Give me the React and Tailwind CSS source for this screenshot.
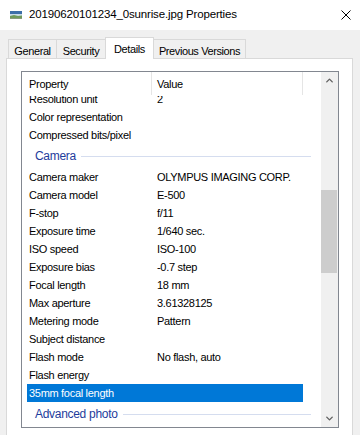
import { ChevronUp, ChevronDown } from 'lucide-react'

const ROWS_TOP = [
  ['Color representation', ''],
  ['Compressed bits/pixel', ''],
]

const CAMERA = [
  ['Camera maker', 'OLYMPUS IMAGING CORP.'],
  ['Camera model', 'E-500'],
  ['F-stop', 'f/11'],
  ['Exposure time', '1/640 sec.'],
  ['ISO speed', 'ISO-100'],
  ['Exposure bias', '-0.7 step'],
  ['Focal length', '18 mm'],
  ['Max aperture', '3.61328125'],
  ['Metering mode', 'Pattern'],
  ['Subject distance', ''],
  ['Flash mode', 'No flash, auto'],
  ['Flash energy', ''],
  ['35mm focal length', '', true],
]

const TABS = [
  { label: 'General', w: 'w-[49px]' },
  { label: 'Security', w: 'w-[50px]' },
  { label: 'Details', w: 'w-[49px]', active: true },
  { label: 'Previous Versions', w: 'w-[93px]' },
]

function Row({ name, value, selected }) {
  return (
    <div
      className={`h-[18px] w-[276px] ml-[5px] pl-[2px] flex items-center shrink-0 ${
        selected ? 'bg-[#0078d7] text-white' : 'text-black'
      }`}
    >
      <span className="w-[128px] shrink-0 whitespace-nowrap">{name}</span>
      <span className="whitespace-nowrap">{value}</span>
    </div>
  )
}

function Group({ label }) {
  return (
    <div className="h-[24px] flex items-center pl-[13px] pr-[10px] shrink-0">
      <span className="text-[#1e3c9c] text-[12px] whitespace-nowrap">{label}</span>
      <div className="flex-1 h-px bg-[#d5ddef] ml-[5px]" />
    </div>
  )
}

export default function App() {
  return (
    <div className="w-[360px] h-[435px] bg-[#f0f0f0] overflow-hidden font-['Liberation_Sans',Arial,sans-serif] text-black">
      {/* title bar */}
      <div className="h-[30px] bg-white flex items-center pl-[10px] pr-[9px]">
        <svg width="12" height="8" viewBox="0 0 12 8" className="shrink-0">
          <rect x="0" y="0" width="12" height="8" fill="#5a7fa6" />
          <rect x="0" y="0" width="12" height="3" fill="#3c6ea8" />
          <rect x="0" y="3" width="12" height="2" fill="#c9dbe8" />
          <path d="M0 5 L4 4 L8 5 L12 4.5 L12 8 L0 8 Z" fill="#6f9a5a" />
          <rect x="0" y="7" width="12" height="1" fill="#8a9a80" />
        </svg>
        <span className="ml-[7px] text-[11.5px] tracking-[-0.15px] whitespace-nowrap">
          20190620101234_0sunrise.jpg Properties
        </span>
        <svg width="10" height="10" viewBox="0 0 10 10" className="ml-auto shrink-0">
          <path d="M0.5 0.5 L9.5 9.5 M9.5 0.5 L0.5 9.5" stroke="#000" strokeWidth="1" />
        </svg>
      </div>

      {/* tabs */}
      <div className="pt-[7px] pl-[8px] h-[28px] flex items-end text-[11px] tracking-[-0.4px]">
        {TABS.map((t, i) => (
          <div
            key={t.label}
            className={`${t.w} ${i > 0 ? '-ml-px' : ''} border border-b-0 border-[#d9d9d9] flex justify-center ${
              t.active
                ? 'h-[22px] bg-white relative z-10 -mb-px pt-[3px]'
                : 'h-[19px] bg-[#f0f0f0] pt-[3px]'
            }`}
          >
            <span className="whitespace-nowrap">{t.label}</span>
          </div>
        ))}
      </div>

      {/* panel */}
      <div className="ml-[6px] w-[347px] h-[400px] bg-white border border-[#d9d9d9] pl-[14px] pt-[12px]">
        <div className="w-[318px] h-[357px] border border-[#828790] flex text-[11px] tracking-[-0.3px]">
          <div className="flex-1 flex flex-col overflow-hidden">
            {/* header */}
            <div className="h-[24px] flex items-stretch shrink-0">
              <div className="w-[129px] pl-[7px] flex items-center">Property</div>
              <div className="w-px mb-px bg-[#e5e5e5]" />
              <div className="w-[150px] pl-[5px] flex items-center">Value</div>
              <div className="w-px mb-px bg-[#e5e5e5]" />
            </div>
            <div className="h-[12px] overflow-hidden shrink-0">
              <div className="-mt-[6px]">
                <Row name="Resolution unit" value="2" />
              </div>
            </div>
            {ROWS_TOP.map(([n, v]) => (
              <Row key={n} name={n} value={v} />
            ))}
            <Group label="Camera" />
            {CAMERA.map(([n, v, s]) => (
              <Row key={n} name={n} value={v} selected={s} />
            ))}
            <Group label="Advanced photo" />
          </div>

          {/* scrollbar */}
          <div className="w-[17px] bg-[#f0f0f0] flex flex-col shrink-0">
            <div className="h-[17px] flex items-center justify-center text-[#606060]">
              <ChevronUp size={11} strokeWidth={3} />
            </div>
            <div className="flex-1">
              <div className="mt-[101px] h-[83px] w-[16px] bg-[#cdcdcd]" />
            </div>
            <div className="h-[17px] flex items-center justify-center text-[#606060]">
              <ChevronDown size={11} strokeWidth={3} />
            </div>
          </div>
        </div>
      </div>
    </div>
  )
}
